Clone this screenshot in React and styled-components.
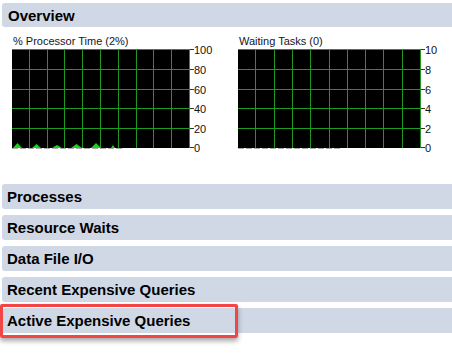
import React from "react";
import styled, { createGlobalStyle } from "styled-components";

const Global = createGlobalStyle`
  html, body { margin: 0; padding: 0; background: #fff; }
  body { font-family: "Liberation Sans", Arial, sans-serif; overflow: hidden; }
`;

const Page = styled.div`
  width: 452px;
  height: 356px;
  display: flex;
  flex-direction: column;
  padding-top: 3px;
  box-sizing: border-box;
`;

const SectionHeader = styled.div`
  position: relative;
  margin-left: 2px;
  height: ${(p) => p.$h || 25}px;
  background: #d0d7e5;
  border-radius: 3px 0 0 3px;
  display: flex;
  align-items: center;
  padding-left: ${(p) => p.$pad || 5}px;
  font-weight: bold;
  font-size: 15px;
  color: #000;
`;

const Highlight = styled.div`
  position: absolute;
  left: -2px;
  top: -4px;
  width: 238px;
  height: 34px;
  box-sizing: border-box;
  border: 3px solid #f24646;
  border-radius: 2px;
  box-shadow: 0 3px 5px rgba(0, 0, 0, 0.35);
  pointer-events: none;
`;

const ChartsRow = styled.div`
  display: flex;
  padding-left: 12px;
  margin-top: 8px;
  height: 149px;
`;

const ChartBlock = styled.div`
  width: ${(p) => p.$w}px;
  display: flex;
  flex-direction: column;
`;

const ChartTitle = styled.div`
  font-size: 11px;
  line-height: 13px;
  height: 14px;
  color: #141428;
  padding-left: 1px;
  white-space: nowrap;
`;

const Svg = styled.svg`
  display: block;
  overflow: visible;
  font-family: "Liberation Sans", Arial, sans-serif;
`;

function Chart({ title, width, labels, history, peaks, blockWidth }) {
  const h = 99;
  const rows = 5;
  const cols = 10;
  const v = [];
  for (let i = 1; i <= cols; i++) {
    const x = Math.round((i * width) / cols) - 0.5;
    v.push(<line key={"v" + i} x1={x} y1={0} x2={x} y2={h} stroke="#1f9a1f" strokeWidth="1" />);
  }
  const hl = [];
  const ticks = [];
  for (let j = 0; j <= rows; j++) {
    const y = Math.round((j * h) / rows) + (j === rows ? -0.5 : 0.5);
    if (j < rows)
      hl.push(<line key={"h" + j} x1={0} y1={y} x2={width} y2={y} stroke="#1f9a1f" strokeWidth="1" />);
    ticks.push(<line key={"t" + j} x1={width} y1={y} x2={width + 4} y2={y} stroke="#333" strokeWidth="1" />);
    ticks.push(
      <text key={"l" + j} x={width + 4} y={y + 4} fontSize="11" fill="#111">
        {labels[j]}
      </text>
    );
  }
  return (
    <ChartBlock $w={blockWidth}>
      <ChartTitle>{title}</ChartTitle>
      <Svg width={width + 22} height={h + 4}>
        <rect x="0" y="0" width={width} height={h} fill="#000" />
        {hl}
        {v}
        {peaks.map((p, i) => (
          <polygon
            key={"p" + i}
            points={`${p[0]},${h} ${p[0] + p[1] / 2},${h - p[2]} ${p[0] + p[1]},${h}`}
            fill="#19d419"
          />
        ))}
        {ticks}
        <line x1="0" y1={h + 0.5} x2={history} y2={h + 0.5} stroke="#aaa" strokeWidth="1" strokeDasharray="6 2" />
      </Svg>
    </ChartBlock>
  );
}

const Sections = styled.div`
  display: flex;
  flex-direction: column;
  gap: 6px;
`;

export default function App() {
  const cpuPeaks = [
    [1, 9, 5],
    [20, 9, 4],
    [40, 10, 3],
    [59, 11, 4],
    [79, 10, 5],
    [99, 4, 3],
  ];
  return (
    <Page>
      <Global />
      <SectionHeader $h={24} $pad={6}>Overview</SectionHeader>
      <ChartsRow>
        <Chart
          title="% Processor Time (2%)"
          width={178}
          blockWidth={226}
          labels={["100", "80", "60", "40", "20", "0"]}
          history={110}
          peaks={cpuPeaks}
        />
        <Chart
          title="Waiting Tasks (0)"
          width={183}
          blockWidth={210}
          labels={["10", "8", "6", "4", "2", "0"]}
          history={104}
          peaks={[]}
        />
      </ChartsRow>
      <Sections>
        <SectionHeader>Processes</SectionHeader>
        <SectionHeader>Resource Waits</SectionHeader>
        <SectionHeader>Data File I/O</SectionHeader>
        <SectionHeader>Recent Expensive Queries</SectionHeader>
        <SectionHeader>
          Active Expensive Queries
          <Highlight />
        </SectionHeader>
      </Sections>
    </Page>
  );
}
